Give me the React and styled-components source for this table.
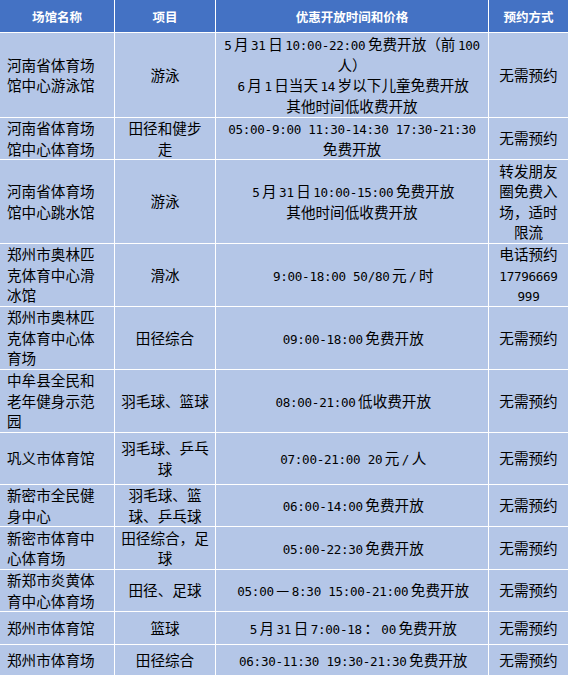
import React from 'react';
import styled, { createGlobalStyle } from 'styled-components';

const GlobalStyle = createGlobalStyle`
  html, body {
    margin: 0;
    padding: 0;
    background: #ffffff;
  }
  body {
    font-family: "Noto Sans CJK SC", "Noto Sans", sans-serif;
  }
`;

// each cell is a list of lines, the way they break in the original
const rows = [
  {
    name: ['河南省体育场', '馆中心游泳馆'],
    item: ['游泳'],
    time: ['5月31日10:00-22:00免费开放（前100', '人）', '6月1日当天14岁以下儿童免费开放', '其他时间低收费开放'],
    book: ['无需预约'],
  },
  {
    name: ['河南省体育场', '馆中心体育场'],
    item: ['田径和健步', '走'],
    time: ['05:00-9:00 11:30-14:30 17:30-21:30', '免费开放'],
    book: ['无需预约'],
  },
  {
    name: ['河南省体育场', '馆中心跳水馆'],
    item: ['游泳'],
    time: ['5月31日10:00-15:00免费开放', '其他时间低收费开放'],
    book: ['转发朋友', '圈免费入', '场，适时', '限流'],
  },
  {
    name: ['郑州市奥林匹', '克体育中心滑', '冰馆'],
    item: ['滑冰'],
    time: ['9:00-18:00 50/80元/时'],
    book: ['电话预约', '17796669', '999'],
  },
  {
    name: ['郑州市奥林匹', '克体育中心体', '育场'],
    item: ['田径综合'],
    time: ['09:00-18:00 免费开放'],
    book: ['无需预约'],
  },
  {
    name: ['中牟县全民和', '老年健身示范', '园'],
    item: ['羽毛球、篮球'],
    time: ['08:00-21:00 低收费开放'],
    book: ['无需预约'],
  },
  {
    name: ['巩义市体育馆'],
    item: ['羽毛球、乒乓', '球'],
    time: ['07:00-21:00 20元/人'],
    book: ['无需预约'],
  },
  {
    name: ['新密市全民健', '身中心'],
    item: ['羽毛球、篮', '球、乒乓球'],
    time: ['06:00-14:00 免费开放'],
    book: ['无需预约'],
  },
  {
    name: ['新密市体育中', '心体育场'],
    item: ['田径综合，足', '球'],
    time: ['05:00-22:30 免费开放'],
    book: ['无需预约'],
  },
  {
    name: ['新郑市炎黄体', '育中心体育场'],
    item: ['田径、足球'],
    time: ['05:00—8:30 15:00-21:00 免费开放'],
    book: ['无需预约'],
  },
  {
    name: ['郑州市体育馆'],
    item: ['篮球'],
    time: ['5月31日7:00-18：00 免费开放'],
    book: ['无需预约'],
  },
  {
    name: ['郑州市体育场'],
    item: ['田径综合'],
    time: ['06:30-11:30 19:30-21:30 免费开放'],
    book: ['无需预约'],
  },
];

// half-width runs (digits, colons, spaces) get a narrow font and a little
// gap against the CJK text around them, like Word's auto spacing
const splitLatin = (text) =>
  text.split(/([\x20-\x7e]+)/).map((part, i) => {
    if (!/^[\x20-\x7e]+$/.test(part)) return part;
    const t = part.trim();
    return t ? <Latin key={i}>{t}</Latin> : null;
  });

const Lines = ({ lines }) => lines.map((l, i) => <Line key={i}>{splitLatin(l)}</Line>);

const App = () => {
  return (
    <>
      <GlobalStyle />
      <Table>
        <HeadCell>场馆名称</HeadCell>
        <HeadCell>项目</HeadCell>
        <HeadCell>优惠开放时间和价格</HeadCell>
        <HeadCell>预约方式</HeadCell>
        {rows.map((r, i) => (
          <React.Fragment key={i}>
            <Cell $align="left"><Lines lines={r.name} /></Cell>
            <Cell><Lines lines={r.item} /></Cell>
            <Cell><Lines lines={r.time} /></Cell>
            <Cell><Lines lines={r.book} /></Cell>
          </React.Fragment>
        ))}
      </Table>
    </>
  );
};

export default App;

const Table = styled.div`
  display: grid;
  width: 568px;
  height: 675px;
  overflow: hidden;
  grid-template-columns: 114px 100px 272px 79px;
  grid-template-rows: 32px 84px 41px 83px 62px 62px 62px 51px 41px 42px 41px 32px 31px;
  gap: 1px;
  background-color: #ffffff;
`;

const HeadCell = styled.div`
  display: flex;
  align-items: center;
  justify-content: center;
  background-color: #4472c4;
  color: #ffffff;
  font-size: 12.5px;
  font-weight: 700;
`;

const Cell = styled.div`
  display: flex;
  flex-direction: column;
  justify-content: center;
  align-items: ${(p) => (p.$align === 'left' ? 'flex-start' : 'center')};
  padding: 0 ${(p) => (p.$align === 'left' ? '7px' : '0')};
  background-color: #b4c6e7;
  color: #000000;
  font-size: 14.6px;
  line-height: 20.5px;
  overflow: hidden;
`;

const Line = styled.div`
  height: 20.5px;
  white-space: pre;
`;

const Latin = styled.span`
  font-family: "DejaVu Sans Mono", "Liberation Mono", monospace;
  font-size: 12.6px;
  line-height: 1;
  letter-spacing: -0.3px;
  padding: 0 2.5px;
`;
